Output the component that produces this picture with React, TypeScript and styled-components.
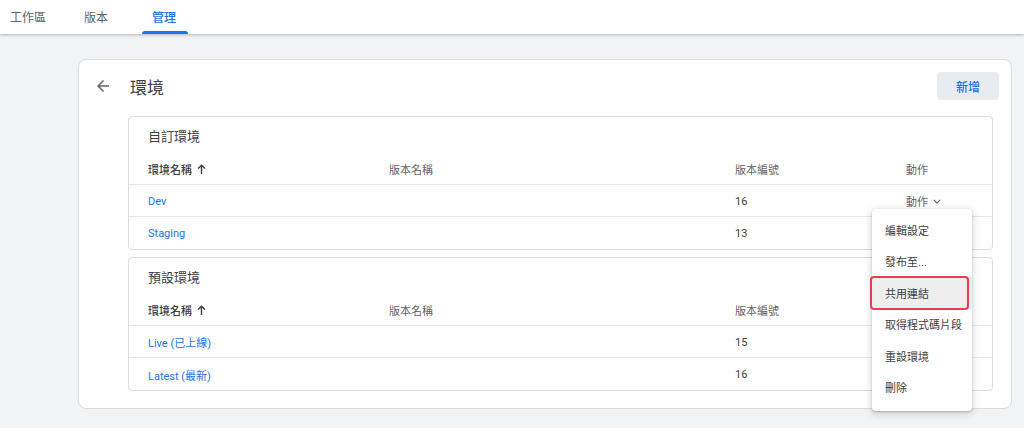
import React from "react";
import styled, { createGlobalStyle } from "styled-components";

const GlobalStyle = createGlobalStyle`
  html, body {
    margin: 0;
    padding: 0;
    background: #f1f3f4;
    font-family: Roboto, "Noto Sans CJK TC", "Noto Sans", sans-serif;
    color: #3c4043;
  }
  * { box-sizing: border-box; }
`;

const Page = styled.div`
  width: 1024px;
  height: 428px;
  overflow: hidden;
  background: #f1f3f4;
`;

const TopBar = styled.nav`
  height: 34px;
  background: #fff;
  display: flex;
  align-items: stretch;
  box-shadow: 0 1px 3px rgba(60, 64, 67, 0.35);
  position: relative;
  z-index: 1;
`;

const Tab = styled.div<{ $active?: boolean; $after: number }>`
  position: relative;
  display: flex;
  align-items: center;
  padding: 0 10px 2px;
  margin-right: ${(p) => p.$after}px;
  font-size: 12px;
  color: ${(p) => (p.$active ? "#1a73e8" : "#5f6368")};
  font-weight: ${(p) => (p.$active ? 500 : 400)};
  &::after {
    content: "";
    display: ${(p) => (p.$active ? "block" : "none")};
    position: absolute;
    left: 0;
    right: -2px;
    bottom: 0;
    height: 3px;
    border-radius: 3px 3px 0 0;
    background: #1a73e8;
  }
`;

const Content = styled.main`
  padding: 25px 12px 0 78px;
`;

const Card = styled.section`
  width: 934px;
  height: 350px;
  background: #fff;
  border: 1px solid #dadce0;
  border-radius: 8px;
  padding: 12px 12px 18px 15px;
`;

const CardHeader = styled.header`
  display: flex;
  align-items: center;
  height: 28px;
  margin-bottom: 16px;
`;

const BackButton = styled.span`
  display: flex;
  width: 18px;
  height: 18px;
  margin-right: 18px;
  color: #5f6368;
`;

const Title = styled.h1`
  flex: 1;
  margin: 0;
  font-size: 17px;
  font-weight: 400;
  color: #3c4043;
`;

const AddButton = styled.button`
  width: 62px;
  height: 28px;
  border: none;
  border-radius: 4px;
  background: #e8ebf0;
  color: #1a73e8;
  font-family: inherit;
  font-size: 12px;
  font-weight: 500;
`;

const Sections = styled.div`
  display: flex;
  flex-direction: column;
  gap: 7px;
  margin: 0 6px 0 34px;
`;

const Section = styled.div`
  border: 1px solid #dadce0;
  border-radius: 4px;
`;

const SectionTitle = styled.h2`
  margin: 0;
  height: 36px;
  padding: 0 19px;
  display: flex;
  align-items: center;
  font-size: 13px;
  font-weight: 400;
  color: #3c4043;
`;

const Row = styled.div<{ $head?: boolean; $last?: boolean }>`
  display: grid;
  grid-template-columns: 241px 346px 171px 1fr;
  align-items: center;
  height: 32px;
  padding: 1px 0 0 19px;
  font-size: 11px;
  border-bottom: ${(p) => (p.$last ? "none" : "1px solid #e3e5e8")};
`;

const HeadCell = styled.span<{ $strong?: boolean }>`
  display: flex;
  align-items: center;
  gap: 5px;
  color: ${(p) => (p.$strong ? "#3c4043" : "#5f6368")};
  font-weight: ${(p) => (p.$strong ? 500 : 400)};
`;

const NameLink = styled.a`
  color: #1a73e8;
  text-decoration: none;
`;

const Cell = styled.span`
  color: #3c4043;
`;

const ActionCell = styled.span`
  position: relative;
  align-self: stretch;
  display: flex;
  align-items: center;
  gap: 5px;
  color: #5f6368;
`;

const Menu = styled.ul`
  position: absolute;
  top: 23px;
  left: -34px;
  width: 100px;
  margin: 0;
  padding: 5px 0 8px;
  list-style: none;
  background: #fff;
  border-radius: 4px;
  box-shadow: 0 1px 2px rgba(60, 64, 67, 0.3), 0 2px 6px 2px rgba(60, 64, 67, 0.15);
  z-index: 2;
`;

const MenuItem = styled.li<{ $focused?: boolean }>`
  position: relative;
  height: 31.5px;
  display: flex;
  align-items: center;
  padding: 0 13px;
  font-size: 11px;
  color: #3c4043;
  white-space: nowrap;
  background: ${(p) => (p.$focused ? "#eeeeef" : "transparent")};
  &::after {
    content: "";
    display: ${(p) => (p.$focused ? "block" : "none")};
    position: absolute;
    left: -2px;
    right: 3px;
    top: -1px;
    bottom: -1px;
    border: 2px solid #ec3b4f;
    border-radius: 4px;
  }
`;

const ArrowBack = () => (
  <svg width="18" height="18" viewBox="0 0 24 24" fill="currentColor">
    <path d="M20 11H7.83l5.59-5.59L12 4l-8 8 8 8 1.41-1.41L7.83 13H20v-2z" />
  </svg>
);

const SortUp = () => (
  <svg width="9" height="10" viewBox="0 0 9 10" fill="none" stroke="#3c4043" strokeWidth="1.4">
    <path d="M4.5 10V1.2M1 4.6 4.5 1.2 8 4.6" />
  </svg>
);

const Chevron = () => (
  <svg width="8" height="5" viewBox="0 0 8 5" fill="none" stroke="#5f6368" strokeWidth="1.1">
    <path d="M0.8 0.8 4 4 7.2 0.8" />
  </svg>
);

type Env = { name: string; version: string };

const custom: Env[] = [
  { name: "Dev", version: "16" },
  { name: "Staging", version: "13" },
];

const defaults: Env[] = [
  { name: "Live (已上線)", version: "15" },
  { name: "Latest (最新)", version: "16" },
];

const menuItems = ["編輯設定", "發布至...", "共用連結", "取得程式碼片段", "重設環境", "刪除"];

const HeaderRow = ({ withAction }: { withAction?: boolean }) => (
  <Row $head>
    <HeadCell $strong>
      環境名稱 <SortUp />
    </HeadCell>
    <HeadCell>版本名稱</HeadCell>
    <HeadCell>版本編號</HeadCell>
    <HeadCell>{withAction ? "動作" : ""}</HeadCell>
  </Row>
);

export default function App() {
  return (
    <Page>
      <GlobalStyle />
      <TopBar>
        <Tab $after={18}>工作區</Tab>
        <Tab $after={24}>版本</Tab>
        <Tab $active $after={0}>管理</Tab>
      </TopBar>
      <Content>
        <Card>
          <CardHeader>
            <BackButton>
              <ArrowBack />
            </BackButton>
            <Title>環境</Title>
            <AddButton>新增</AddButton>
          </CardHeader>
          <Sections>
            <Section>
              <SectionTitle>自訂環境</SectionTitle>
              <HeaderRow withAction />
              {custom.map((env, i) => (
                <Row key={env.name} $last={i === custom.length - 1}>
                  <NameLink>{env.name}</NameLink>
                  <Cell />
                  <Cell>{env.version}</Cell>
                  {i === 0 ? (
                    <ActionCell>
                      動作 <Chevron />
                      <Menu>
                        {menuItems.map((m) => (
                          <MenuItem key={m} $focused={m === "共用連結"}>
                            {m}
                          </MenuItem>
                        ))}
                      </Menu>
                    </ActionCell>
                  ) : (
                    <Cell />
                  )}
                </Row>
              ))}
            </Section>
            <Section>
              <SectionTitle>預設環境</SectionTitle>
              <HeaderRow />
              {defaults.map((env, i) => (
                <Row key={env.name} $last={i === defaults.length - 1}>
                  <NameLink>{env.name}</NameLink>
                  <Cell />
                  <Cell>{env.version}</Cell>
                  <Cell />
                </Row>
              ))}
            </Section>
          </Sections>
        </Card>
      </Content>
    </Page>
  );
}
